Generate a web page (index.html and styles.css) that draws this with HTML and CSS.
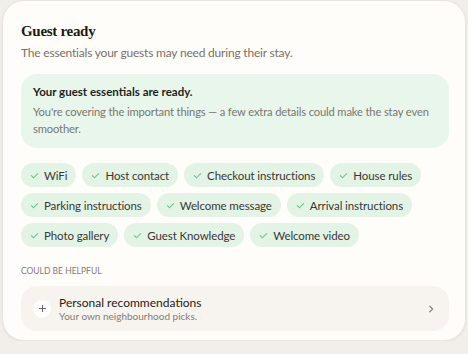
FILE: index.html
```html
<!DOCTYPE html>
<html lang="en">
<head>
    <meta charset="UTF-8">
    <meta name="viewport" content="width=device-width, initial-scale=1.0">
    <title>Guest ready</title>
    <link rel="stylesheet" href="styles.css">
</head>
<body>
    <div class="card">
        <h1 class="card-title">Guest ready</h1>
        <p class="card-sub">The essentials your guests may need during their stay.</p>

        <div class="ready-box">
            <div class="ready-title">Your guest essentials are ready.</div>
            <div class="ready-text">You're covering the important things — a few extra details could make the stay even smoother.</div>
        </div>

        <div class="chips">
            <span class="chip"><svg class="check" viewBox="0 0 10 10"><path d="M1.5 5.2 L4 7.5 L8.5 2.8"/></svg>WiFi</span>
            <span class="chip"><svg class="check" viewBox="0 0 10 10"><path d="M1.5 5.2 L4 7.5 L8.5 2.8"/></svg>Host contact</span>
            <span class="chip"><svg class="check" viewBox="0 0 10 10"><path d="M1.5 5.2 L4 7.5 L8.5 2.8"/></svg>Checkout instructions</span>
            <span class="chip"><svg class="check" viewBox="0 0 10 10"><path d="M1.5 5.2 L4 7.5 L8.5 2.8"/></svg>House rules</span>
            <span class="chip"><svg class="check" viewBox="0 0 10 10"><path d="M1.5 5.2 L4 7.5 L8.5 2.8"/></svg>Parking instructions</span>
            <span class="chip"><svg class="check" viewBox="0 0 10 10"><path d="M1.5 5.2 L4 7.5 L8.5 2.8"/></svg>Welcome message</span>
            <span class="chip"><svg class="check" viewBox="0 0 10 10"><path d="M1.5 5.2 L4 7.5 L8.5 2.8"/></svg>Arrival instructions</span>
            <span class="chip"><svg class="check" viewBox="0 0 10 10"><path d="M1.5 5.2 L4 7.5 L8.5 2.8"/></svg>Photo gallery</span>
            <span class="chip"><svg class="check" viewBox="0 0 10 10"><path d="M1.5 5.2 L4 7.5 L8.5 2.8"/></svg>Guest Knowledge</span>
            <span class="chip"><svg class="check" viewBox="0 0 10 10"><path d="M1.5 5.2 L4 7.5 L8.5 2.8"/></svg>Welcome video</span>
        </div>

        <div class="section-label">COULD BE HELPFUL</div>

        <div class="suggestion">
            <span class="plus"><svg viewBox="0 0 10 10"><path d="M5 1 V9 M1 5 H9"/></svg></span>
            <div class="suggestion-body">
                <div class="suggestion-title">Personal recommendations</div>
                <div class="suggestion-text">Your own neighbourhood picks.</div>
            </div>
            <svg class="chevron" viewBox="0 0 10 10"><path d="M3.5 1.5 L7 5 L3.5 8.5"/></svg>
        </div>
    </div>
</body>
</html>
```

FILE: styles.css
```css
body {
    margin: 0;
    background-color: #f2eee9;
    font-family: Lato, "Noto Sans", sans-serif;
}

/* the main card */
.card {
    margin: 0 2px;
    width: 464px;
    height: 341px;
    box-sizing: border-box;
    padding: 20px 16px 0 18px;
    background-color: #fffdf9;
    border: 1px solid #e9e4dd;
    border-radius: 22px;
    box-shadow: 0 1px 3px rgba(0, 0, 0, 0.06);
}

.card-title {
    margin: 0;
    font-family: "Liberation Serif", "DejaVu Serif", serif;
    font-size: 15px;
    letter-spacing: -0.3px;
    line-height: 20px;
    font-weight: bold;
    color: #1c1a18;
}

.card-sub {
    margin: 4px 0 0;
    font-size: 12px;
    letter-spacing: -0.2px;
    line-height: 16px;
    color: #7b6f6a;
}

.ready-box {
    margin-top: 13px;
    padding: 10px 12px 11px;
    background-color: #e8f6eb;
    border-radius: 16px;
}

.ready-title {
    font-size: 11.5px;
    line-height: 16px;
    font-weight: bold;
    color: #1f1f1f;
}

.ready-text {
    margin-top: 3px;
    font-size: 11.2px;
    letter-spacing: -0.15px;
    line-height: 17px;
    color: #7a7673;
}

/* chips */
.chips {
    margin-top: 15px;
    display: flex;
    flex-wrap: wrap;
    gap: 6px;
}

.chip {
    display: inline-flex;
    align-items: center;
    gap: 5px;
    height: 24px;
    padding: 0 9px 0 9px;
    background-color: #e3f3e6;
    border-radius: 12px;
    font-size: 11.5px;
    letter-spacing: -0.1px;
    color: #3a3835;
}

.check {
    width: 9px;
    height: 9px;
    fill: none;
    stroke: #66c985;
    stroke-width: 1.2;
    stroke-linecap: round;
    stroke-linejoin: round;
}

.section-label {
    margin-top: 19px;
    font-size: 8.5px;
    line-height: 10px;
    color: #857a78;
}

/* suggestion row */
.suggestion {
    margin-top: 10px;
    display: flex;
    align-items: center;
    height: 45px;
    padding: 0 14px 0 12px;
    background-color: #f7f3ef;
    border-radius: 16px;
}

.plus {
    width: 18px;
    height: 18px;
    border-radius: 50%;
    background-color: #ffffff;
    display: flex;
    align-items: center;
    justify-content: center;
}

.plus svg {
    width: 9px;
    height: 9px;
    fill: none;
    stroke: #6f6a66;
    stroke-width: 1.2;
}

.suggestion-body {
    flex-grow: 1;
    margin-left: 8px;
}

.suggestion-title {
    font-size: 12px;
    line-height: 15px;
    color: #242220;
}

.suggestion-text {
    font-size: 10px;
    line-height: 13px;
    color: #857d78;
}

.chevron {
    width: 8px;
    height: 8px;
    fill: none;
    stroke: #8b8480;
    stroke-width: 1.6;
    stroke-linecap: round;
    stroke-linejoin: round;
}
```
